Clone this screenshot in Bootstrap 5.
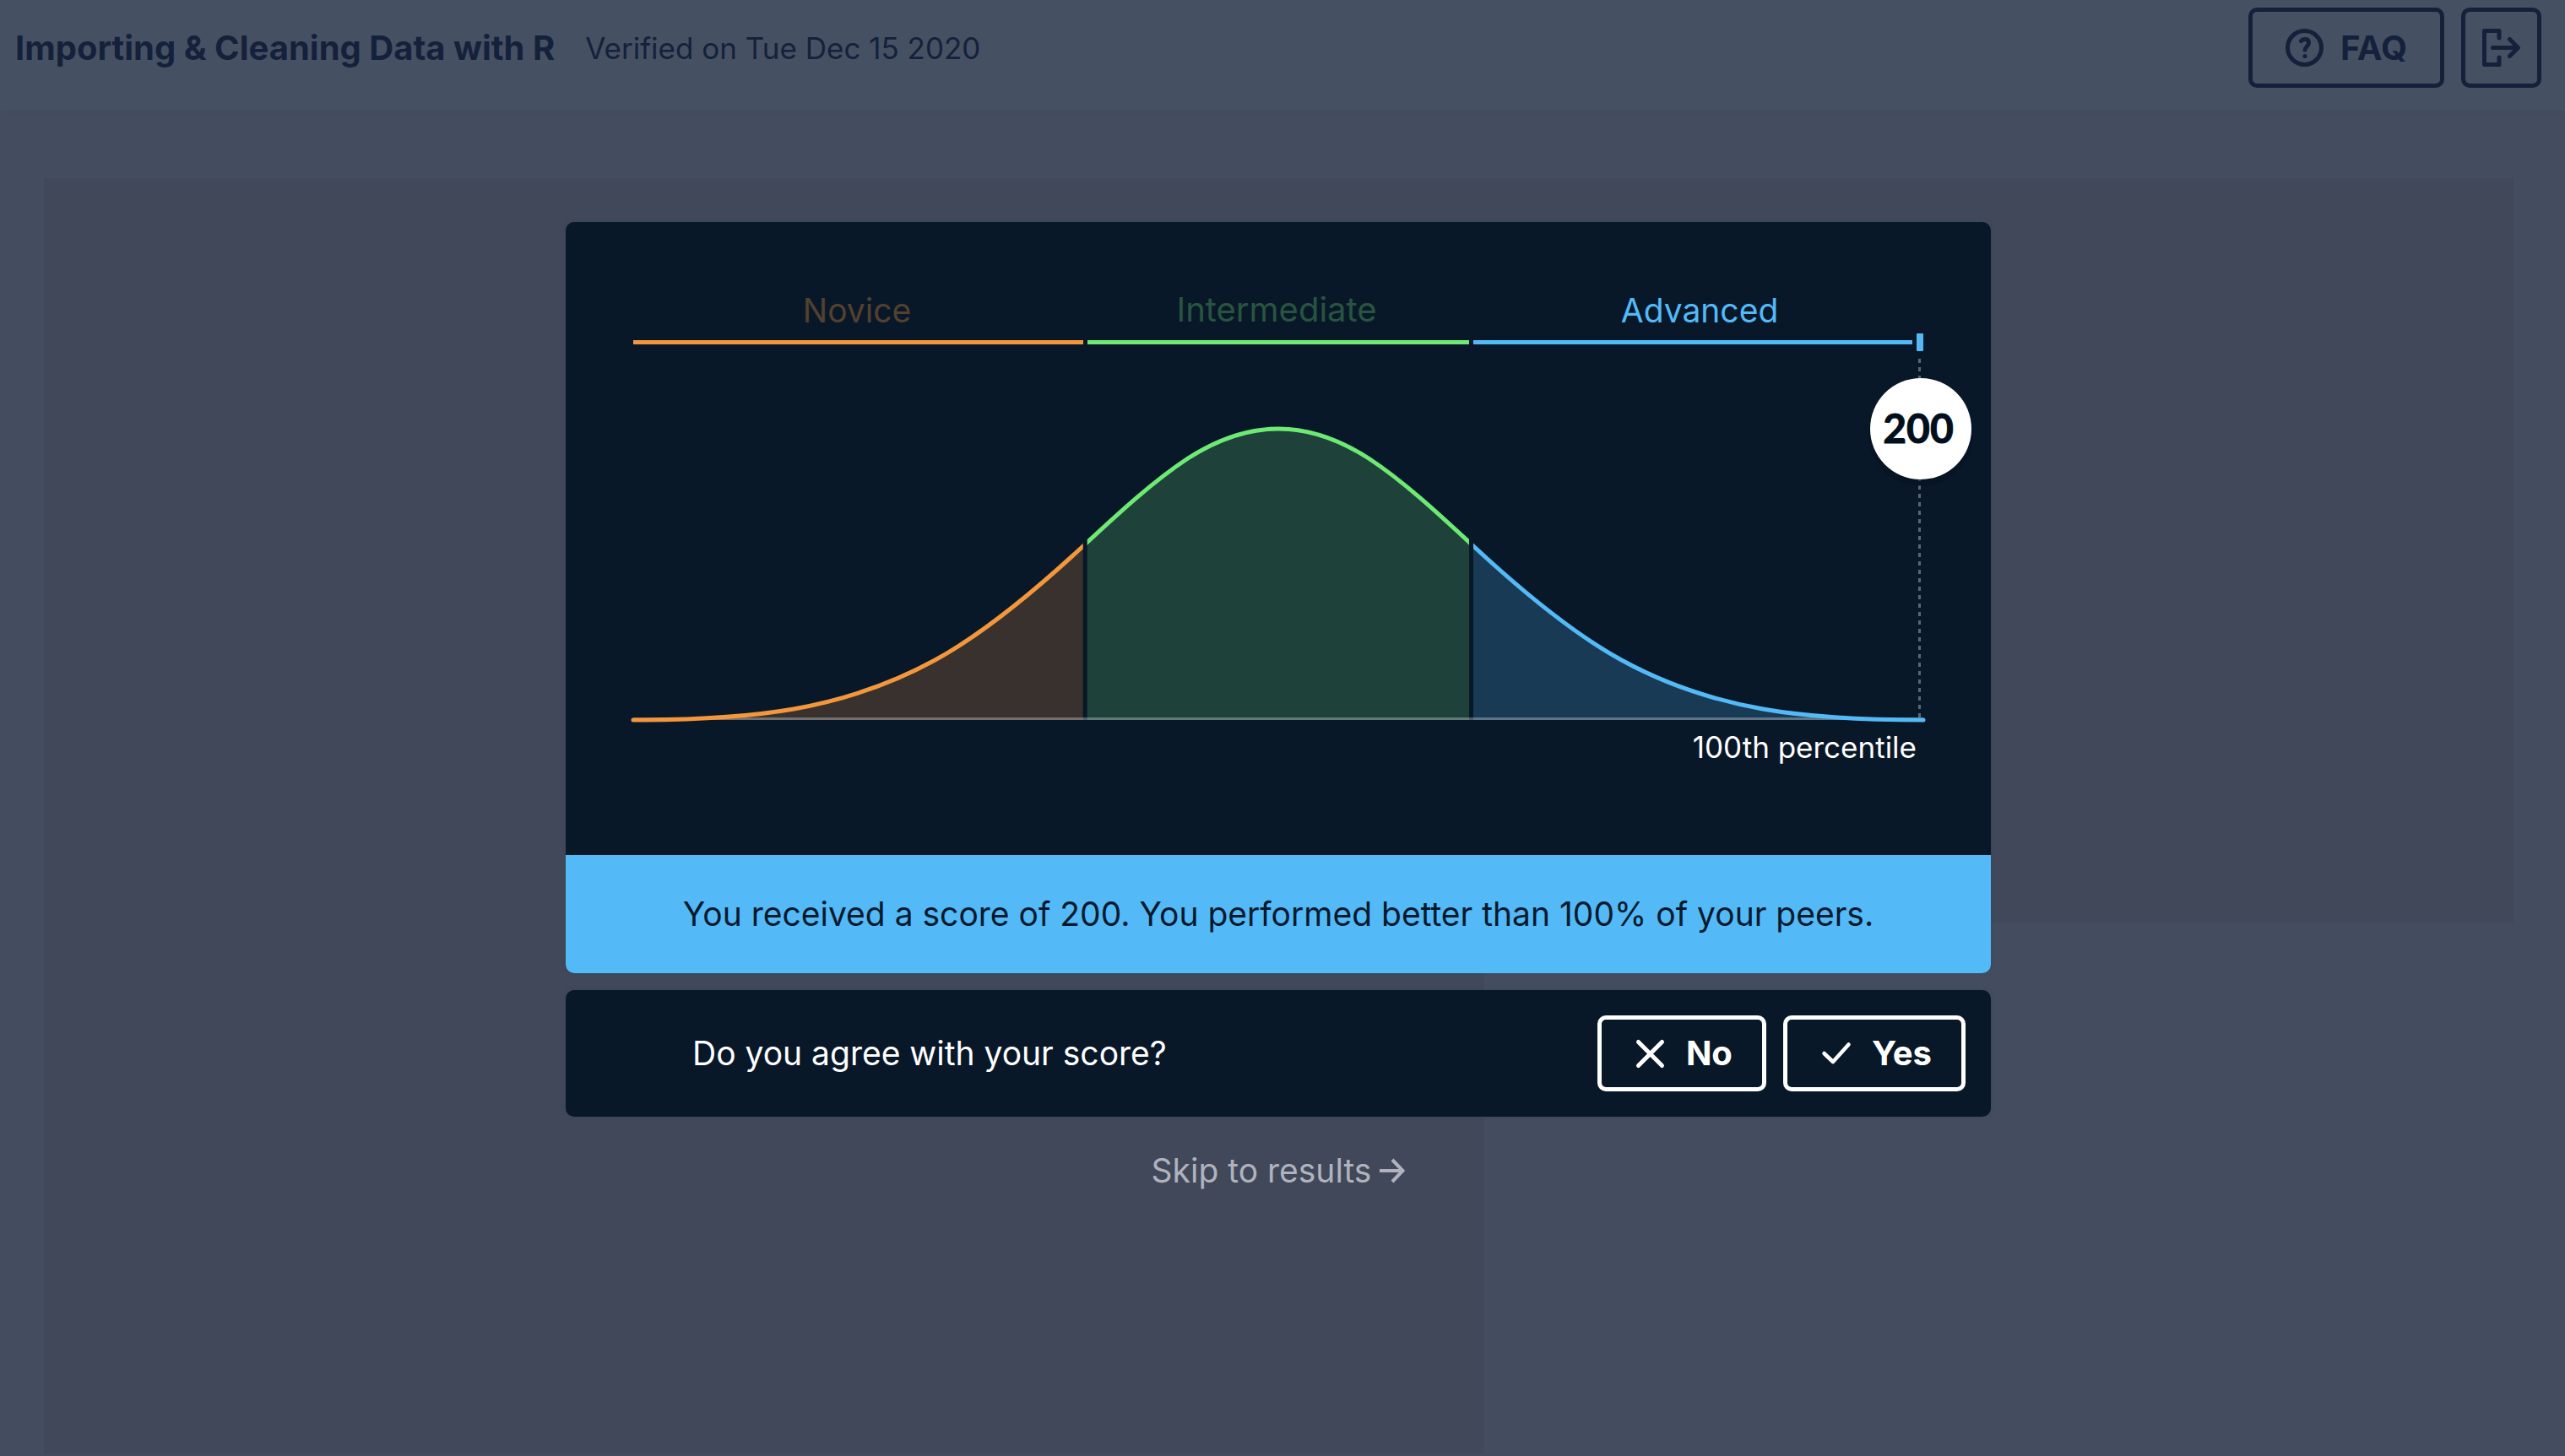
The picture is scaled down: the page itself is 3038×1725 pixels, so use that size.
<!DOCTYPE html>
<html lang="en">
<head>
<meta charset="utf-8">
<meta name="viewport" content="width=device-width, initial-scale=1">
<title>Importing &amp; Cleaning Data with R</title>
<link rel="stylesheet" href="https://cdn.jsdelivr.net/npm/bootstrap@5.3.0/dist/css/bootstrap.min.css">
<style>
:root { --navy: #081829; --ink: #15213b; --blue: #53baf7; --green: #6eea74; --orange: #f2973c; }
body { font-family: Inter, "Liberation Sans", sans-serif; font-size: 39px; line-height: 48px; background: #444d5f; color: var(--ink); }
.topbar { background: #455063; padding: 9px 28px 27px 18px; box-shadow: 0 3px 5px #404c5c; }
.heading-group { gap: 36px; }
.button-row { gap: 20px; }
.course-title { font-size: 40px; line-height: 48px; }
.verified { font-size: 35px; }
.outlined { --bs-btn-padding-y: 0; --bs-btn-padding-x: 35px; --bs-btn-font-size: 40px; --bs-btn-font-weight: 700; --bs-btn-border-width: 5px; --bs-btn-border-radius: 10px;
  --bs-btn-color: #fff; --bs-btn-border-color: #fff; --bs-btn-hover-color: #fff; --bs-btn-hover-border-color: #fff; height: 90px; gap: 20px; }
.outlined-dark { --bs-btn-padding-x: 39px; --bs-btn-color: var(--ink); --bs-btn-border-color: var(--ink); --bs-btn-hover-color: var(--ink); --bs-btn-hover-border-color: var(--ink); height: 95px; }
.outlined-square { --bs-btn-padding-x: 20px; }
.glyph { width: 45px; height: 45px; fill: none; stroke: currentColor; stroke-width: 5; stroke-linecap: round; stroke-linejoin: round; }
.backdrop-area { padding: 80px 61px 3px 52px; }
.pane { background: #40485a; }
.pane-short { height: 882px; }
.score-layer { padding: 263px 10px 0 0; }
.score-column { max-width: 1688px; gap: 20px; }
.score-box { background: var(--navy); border-radius: 10px; box-shadow: 0 0 4px #3b4757; }
.score-banner { background: var(--blue); color: #05192d; padding: 46px 30px; }
.agree-box { padding: 30px 30px 30px 150px; color: #fff; }
.skip-link { color: #b0b3bd; gap: 10px; padding-top: 20px; }
.skip-link .glyph { width: 30px; height: 30px; stroke-width: 4; stroke-linecap: butt; stroke-linejoin: miter; }
.chart-label { font-size: 39px; text-anchor: middle; }
.chart-label-mid { font-size: 40px; }
.chart-note { font-size: 35px; text-anchor: end; fill: #fff; }
.chart-score { font: 700 48px Lato, "Liberation Sans", sans-serif; text-anchor: middle; fill: #020f1d; stroke: #020f1d; stroke-width: 1; }
.bell-line { fill: none; stroke-width: 5; stroke-linecap: round; }
</style>
<script src="https://cdn.jsdelivr.net/npm/bootstrap@5.3.0/dist/js/bootstrap.bundle.min.js"></script>
</head>
<body>
<div class="position-relative min-vh-100 d-flex flex-column">
  <header class="topbar d-flex align-items-center justify-content-between">
    <div class="heading-group d-flex align-items-center">
      <h1 class="course-title fw-bold mb-0">Importing &amp; Cleaning Data with R</h1>
      <span class="verified">Verified on Tue Dec 15 2020</span>
    </div>
    <div class="button-row d-flex">
      <button type="button" class="btn outlined outlined-dark d-flex align-items-center">
        <svg class="glyph" viewBox="0 0 45 45" aria-hidden="true"><circle cx="22.5" cy="22.5" r="20"/><path d="M18.500 14.500Q20 12.500 23.500 12.500Q27.500 12.500 27.500 17Q27.500 19 25 21.500Q23 23.500 23 25" /><circle cx="23" cy="32.5" r="2.6" fill="currentColor" stroke="none"/></svg>
        FAQ
      </button>
      <button type="button" class="btn outlined outlined-dark outlined-square d-flex align-items-center" aria-label="Log out">
        <svg class="glyph" viewBox="0 0 45 45" aria-hidden="true"><path d="M20 11V2.500H2.500V42.500H20V34M12.500 22.500H42M32.500 12.500L42.500 22.500L32.500 32.500"/></svg>
      </button>
    </div>
  </header>

  <main class="backdrop-area flex-grow-1 d-flex">
    <div class="row g-0 flex-grow-1">
      <div class="col-7 pane"></div>
      <div class="col-5"><div class="pane pane-short"></div></div>
    </div>
  </main>

  <div class="score-layer position-absolute top-0 start-0 w-100" role="dialog" aria-label="Your score">
    <div class="score-column w-100 mx-auto d-flex flex-column">
      <section class="score-box overflow-hidden">
        <svg class="d-block w-100" viewBox="0 0 1688 750" role="img" aria-label="Score distribution">
          <defs>
            <path id="bell" d="M80 590C143 590 207 588 270 577C326 567 381 550 437 519.300C496 487 556 437 615 382C656 344 696 307 737 280C773 257 808 245 844 245C880 245 915 257 951 280C992 307 1032 344 1073 382C1132 437 1192 487 1251 519.300C1307 550 1362 567 1418 577C1481 588 1545 590 1608 590"/>
            <clipPath id="zone-novice"><path d="M70 0H612.700V600H70z"/></clipPath>
            <clipPath id="zone-intermediate"><path d="M617.700 0H1070V600H617.700z"/></clipPath>
            <clipPath id="zone-advanced"><path d="M1075 0H1620V600H1075z"/></clipPath>
          </defs>
          <g class="chart-label">
            <text x="345" y="119" fill="#53402f">Novice</text>
            <text class="chart-label-mid" x="842" y="118" fill="#28553f">Intermediate</text>
            <text x="1343" y="119" fill="#53baf7">Advanced</text>
          </g>
          <path d="M80 142.500H613" stroke="#f2973c" stroke-width="5"/>
          <path d="M618 142.500H1070" stroke="#6eea74" stroke-width="5"/>
          <path d="M1075 142.500H1595" stroke="#53baf7" stroke-width="5"/>
          <rect x="1600" y="132" width="8" height="21" rx="1" fill="#53baf7"/>
          <g clip-path="url(#zone-novice)"><use href="#bell" fill="#38312e"/></g>
          <g clip-path="url(#zone-intermediate)"><use href="#bell" fill="#1e4239"/></g>
          <g clip-path="url(#zone-advanced)"><use href="#bell" fill="#183a54"/></g>
          <path d="M80 588.500H1608" stroke="#fff" stroke-opacity=".3" stroke-width="3"/>
          <g clip-path="url(#zone-novice)"><use href="#bell" class="bell-line" stroke="#f2973c"/></g>
          <g clip-path="url(#zone-intermediate)"><use href="#bell" class="bell-line" stroke="#6eea74"/></g>
          <g clip-path="url(#zone-advanced)"><use href="#bell" class="bell-line" stroke="#53baf7"/></g>
          <path d="M1603.500 162V588" stroke="#5b6672" stroke-width="3" stroke-dasharray="5 5"/>
          <circle cx="1605" cy="251" r="62" fill="#04101e" opacity=".4"/>
          <circle cx="1605" cy="245" r="60" fill="#fff"/>
          <text class="chart-score" x="1602" y="262">200</text>
          <text class="chart-note" x="1600" y="635">100th percentile</text>
        </svg>
        <p class="score-banner text-center mb-0">You received a score of 200. You performed better than 100% of your peers.</p>
      </section>
      <section class="score-box agree-box d-flex align-items-center justify-content-between">
        <span>Do you agree with your score?</span>
        <div class="button-row d-flex">
          <button type="button" class="btn outlined d-flex align-items-center">
            <svg class="glyph" viewBox="0 0 45 45" aria-hidden="true"><path d="M8.500 8.500L36.500 36.500M36.500 8.500L8.500 36.500"/></svg>No
          </button>
          <button type="button" class="btn outlined d-flex align-items-center">
            <svg class="glyph" viewBox="0 0 45 45" aria-hidden="true"><path d="M8.500 22L19 32L37.500 11.500" stroke-width="4.500"/></svg>Yes
          </button>
        </div>
      </section>
      <a href="#" class="skip-link d-flex align-items-center justify-content-center text-decoration-none align-self-center">Skip to results
        <svg class="glyph" viewBox="0 0 30 30" aria-hidden="true"><path d="M0 15H27M15 2L27.500 15L15 28"/></svg></a>
    </div>
  </div>
</div>
</body>
</html>
